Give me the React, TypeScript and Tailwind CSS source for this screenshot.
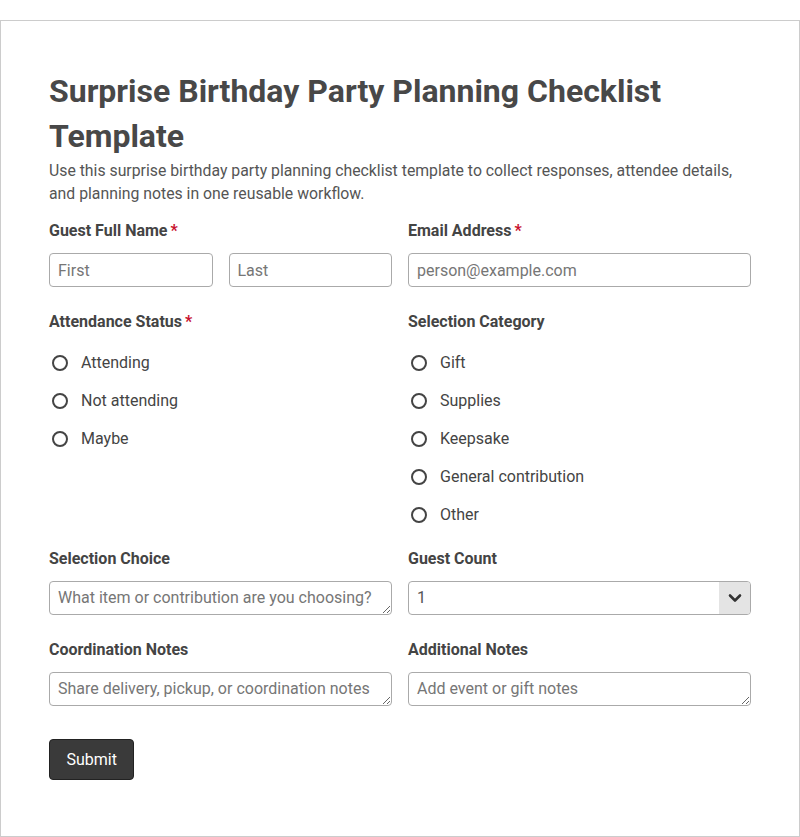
import React from 'react'

const font = { fontFamily: 'Roboto, "Liberation Sans", sans-serif' }

function Label({ text, required }: { text: string; required?: boolean }) {
  return (
    <div className="h-[22px] text-base leading-[22px] font-bold text-[#444]">
      {text}
      {required && <span className="ml-[3px] text-[#c8102e]">*</span>}
    </div>
  )
}

const inputCls =
  'h-[34px] w-full rounded-[4px] border border-[#aaa] bg-white px-[8px] text-base text-[#444] placeholder:text-[#767676] outline-none'

function Radio({ label }: { label: string }) {
  return (
    <label className="flex h-5 items-center gap-[13px] pl-[3px] text-base text-[#444]">
      <span className="h-[16px] w-[16px] rounded-full border-2 border-[#444] bg-white" />
      {label}
    </label>
  )
}

function RadioList({ items }: { items: string[] }) {
  return (
    <div className="-mb-px flex flex-col gap-[18px] pt-5">
      {items.map((i) => (
        <Radio key={i} label={i} />
      ))}
    </div>
  )
}

function Area({ placeholder }: { placeholder: string }) {
  return (
    <textarea
      rows={1}
      placeholder={placeholder}
      className={inputCls + ' mt-[11px] block resize-y py-[5px] leading-[22px]'}
    />
  )
}

export default function App() {
  return (
    <div className="bg-white pt-5" style={font}>
      <div className="border border-[#ccc] px-12 pt-12 pb-14">
        <h1 className="text-[32px] font-bold leading-[45px] text-[#484848]">
          Surprise Birthday Party Planning Checklist Template
        </h1>
        <p className="text-[15.8px] leading-[23px] text-[#555]">
          Use this surprise birthday party planning checklist template to collect responses, attendee details,
          and planning notes in one reusable workflow.
        </p>

        <div className="mt-[15px] grid grid-cols-2 gap-x-4 gap-y-6">
          <div>
            <Label text="Guest Full Name" required />
            <div className="mt-[11px] flex gap-4">
              <input className={inputCls} placeholder="First" />
              <input className={inputCls} placeholder="Last" />
            </div>
          </div>
          <div>
            <Label text="Email Address" required />
            <input className={inputCls + ' mt-[11px] block'} placeholder="person@example.com" />
          </div>

          <div>
            <Label text="Attendance Status" required />
            <RadioList items={['Attending', 'Not attending', 'Maybe']} />
          </div>
          <div>
            <Label text="Selection Category" />
            <RadioList items={['Gift', 'Supplies', 'Keepsake', 'General contribution', 'Other']} />
          </div>

          <div>
            <Label text="Selection Choice" />
            <Area placeholder="What item or contribution are you choosing?" />
          </div>
          <div>
            <Label text="Guest Count" />
            <div className="mt-[11px] flex h-[34px] overflow-hidden rounded-[4px] border border-[#aaa] bg-white">
              <div className="flex flex-1 items-center px-[8px] text-base text-[#555]">1</div>
              <div className="flex w-[31px] items-center justify-center bg-[#e4e4e4]">
                <svg width="14" height="10" viewBox="0 0 14 10" fill="none">
                  <path d="M2 2.5l5 5 5-5" stroke="#333" strokeWidth="2.6" strokeLinecap="round" strokeLinejoin="round" />
                </svg>
              </div>
            </div>
          </div>

          <div>
            <Label text="Coordination Notes" />
            <Area placeholder="Share delivery, pickup, or coordination notes" />
          </div>
          <div>
            <Label text="Additional Notes" />
            <Area placeholder="Add event or gift notes" />
          </div>
        </div>

        <button className="mt-[33px] h-[41px] rounded-[4px] border border-[#222] bg-[#3a3a3a] px-[16.5px] text-base text-white">
          Submit
        </button>
      </div>
    </div>
  )
}
